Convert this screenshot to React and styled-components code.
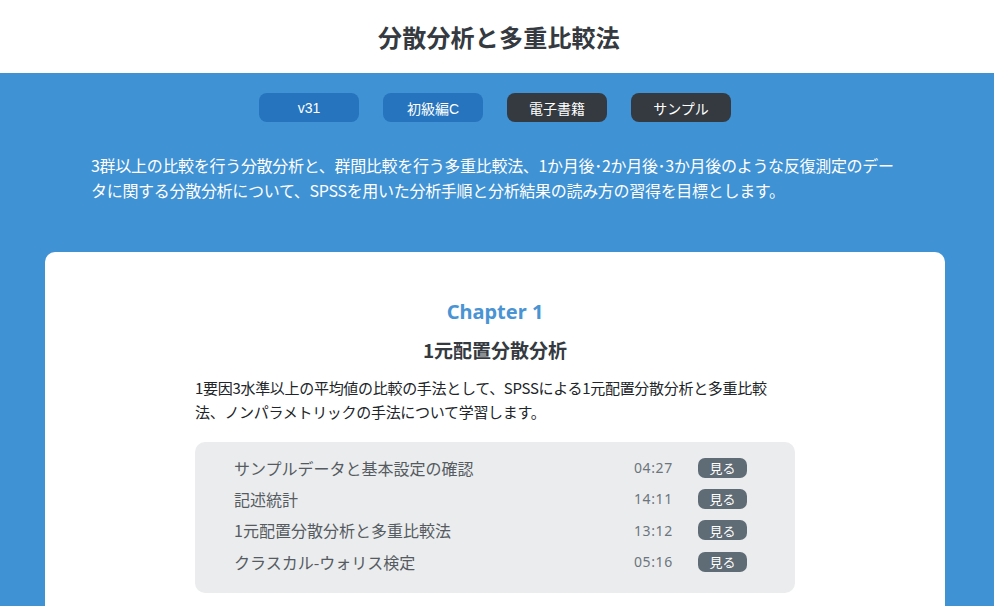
import React from "react";
import styled, { createGlobalStyle } from "styled-components";

const GlobalStyle = createGlobalStyle`
  body {
    margin: 0;
    background: #3f92d4;
    font-family: "Noto Sans", "Noto Sans CJK JP", sans-serif;
  }
`;

const Header = styled.header`
  height: 73px;
  background: #fff;
  display: flex;
  align-items: center;
  justify-content: center;
  padding-right: 4px;
`;

const Title = styled.h1`
  margin: 0 0 0 8px;
  font-size: 24px;
  font-weight: 700;
  color: #343a40;
  font-family: "Noto Sans CJK JP", sans-serif;
  letter-spacing: 0.2px;
`;

const Hero = styled.section`
  background: #3f92d4;
  padding: 20px 4px 0 0;
`;

const BadgeRow = styled.div`
  display: flex;
  justify-content: center;
  gap: 24px;
`;

const Badge = styled.span`
  width: 100px;
  height: 29px;
  border-radius: 8px;
  display: flex;
  align-items: center;
  justify-content: center;
  font-size: 14px;
  color: #fff;
  font-family: "Liberation Sans", "Noto Sans CJK JP", sans-serif;
  background: ${(p) => (p.dark ? "#343a40" : "#2574bd")};
`;

const Lead = styled.p`
  width: 812px;
  margin: 31px auto 0;
  padding-left: 4px;
  color: #fff;
  font-size: 16px;
  line-height: 25px;
  letter-spacing: -0.3px;
  font-family: "Noto Sans CJK JP", sans-serif;
`;

const Card = styled.div`
  width: 900px;
  margin: 49px auto 0;
  background: #fff;
  border-radius: 10px;
  padding: 46px 0 40px;
  display: flex;
  flex-direction: column;
  align-items: center;
`;

const ChapterLabel = styled.div`
  color: #4a94d4;
  font-size: 20px;
  font-weight: 700;
  font-family: "Noto Sans", sans-serif;
`;

const ChapterTitle = styled.h2`
  margin: 11px 0 0;
  font-size: 19px;
  font-weight: 700;
  color: #343a40;
  font-family: "Noto Sans CJK JP", sans-serif;
`;

const ChapterText = styled.p`
  width: 600px;
  margin: 13px 0 0;
  font-size: 15px;
  line-height: 24px;
  color: #212529;
  font-family: "Noto Sans CJK JP", sans-serif;
  letter-spacing: -0.3px;
`;

const Lessons = styled.ul`
  width: 600px;
  box-sizing: border-box;
  list-style: none;
  margin: 18px 0 0;
  padding: 10px 48px 16px 39px;
  background: #ebecee;
  border-radius: 10px;
`;

const Lesson = styled.li`
  display: flex;
  align-items: center;
  height: 31.3px;
`;

const LessonName = styled.span`
  flex: 1;
  font-size: 16px;
  color: #555b61;
  font-family: "Noto Sans CJK JP", sans-serif;
`;

const Duration = styled.span`
  width: 64px;
  font-size: 14px;
  color: #6c757d;
  letter-spacing: 0.6px;
  font-family: "Noto Sans", sans-serif;
`;

const WatchButton = styled.span`
  width: 49px;
  height: 20px;
  border-radius: 7px;
  background: #5f6b75;
  color: #fff;
  font-size: 13px;
  display: flex;
  align-items: center;
  justify-content: center;
  font-family: "Noto Sans CJK JP", sans-serif;
`;

const lessons = [
  { name: "サンプルデータと基本設定の確認", time: "04:27" },
  { name: "記述統計", time: "14:11" },
  { name: "1元配置分散分析と多重比較法", time: "13:12" },
  { name: "クラスカル-ウォリス検定", time: "05:16" },
];

export default function App() {
  return (
    <>
      <GlobalStyle />
      <Header>
        <Title>分散分析と多重比較法</Title>
      </Header>
      <Hero>
        <BadgeRow>
          <Badge>v31</Badge>
          <Badge>初級編C</Badge>
          <Badge dark>電子書籍</Badge>
          <Badge dark>サンプル</Badge>
        </BadgeRow>
        <Lead>
          3群以上の比較を行う分散分析と、群間比較を行う多重比較法、1か月後･2か月後･3か月後のような反復測定のデータに関する分散分析について、SPSSを用いた分析手順と分析結果の読み方の習得を目標とします。
        </Lead>
        <Card>
          <ChapterLabel>Chapter 1</ChapterLabel>
          <ChapterTitle>1元配置分散分析</ChapterTitle>
          <ChapterText>
            1要因3水準以上の平均値の比較の手法として、SPSSによる1元配置分散分析と多重比較法、ノンパラメトリックの手法について学習します。
          </ChapterText>
          <Lessons>
            {lessons.map((l) => (
              <Lesson key={l.name}>
                <LessonName>{l.name}</LessonName>
                <Duration>{l.time}</Duration>
                <WatchButton>見る</WatchButton>
              </Lesson>
            ))}
          </Lessons>
        </Card>
      </Hero>
    </>
  );
}
